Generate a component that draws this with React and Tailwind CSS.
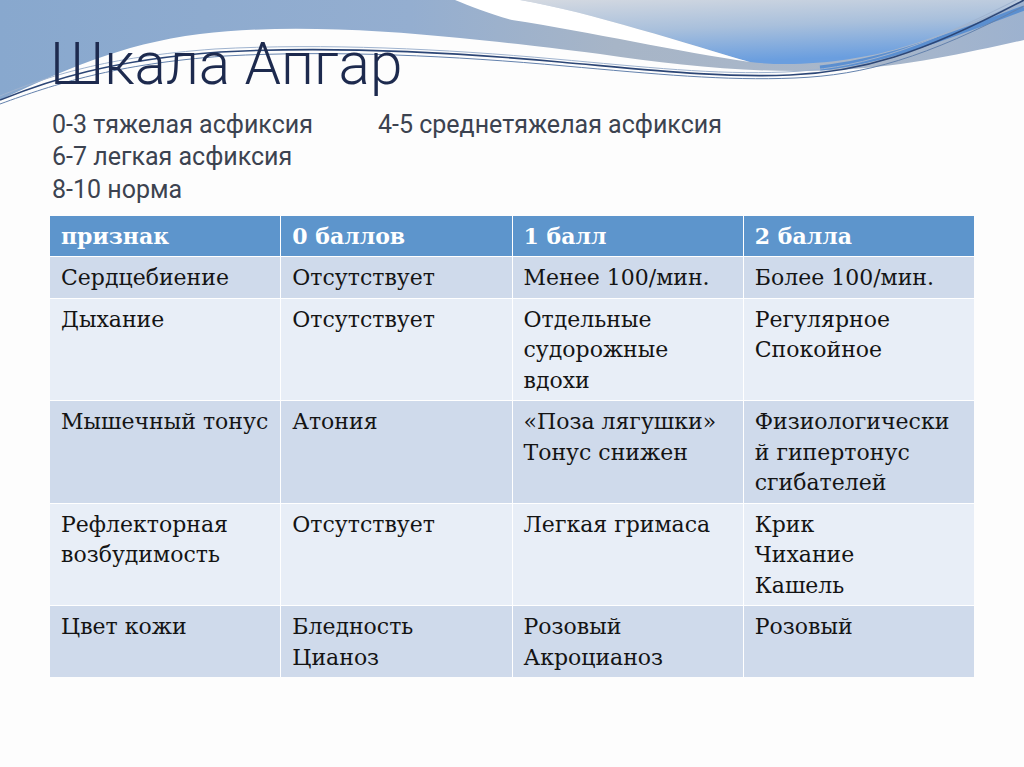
import React from "react";

const rows = [
  { dark: true, cells: [["Сердцебиение"], ["Отсутствует"], ["Менее 100/мин."], ["Более 100/мин."]] },
  { dark: false, cells: [["Дыхание"], ["Отсутствует"], ["Отдельные", "судорожные", "вдохи"], ["Регулярное", "Спокойное"]] },
  { dark: true, cells: [["Мышечный тонус"], ["Атония"], ["«Поза лягушки»", "Тонус снижен"], ["Физиологически", "й гипертонус", "сгибателей"]] },
  { dark: false, cells: [["Рефлекторная", "возбудимость"], ["Отсутствует"], ["Легкая гримаса"], ["Крик", "Чихание", "Кашель"]] },
  { dark: true, cells: [["Цвет кожи"], ["Бледность", "Цианоз"], ["Розовый", "Акроцианоз"], ["Розовый"]] },
];

const headers = ["признак", "0 баллов", "1 балл", "2 балла"];

function Wave() {
  return (
    <svg className="absolute left-0 top-0" width="1024" height="130" viewBox="0 0 1024 130">
      <defs>
        <linearGradient id="band" x1="0" y1="0" x2="1" y2="0">
          <stop offset="0" stopColor="#88a8ce" />
          <stop offset="0.4" stopColor="#94aed0" />
          <stop offset="0.6" stopColor="#a7b5c7" />
          <stop offset="0.85" stopColor="#a9b7ca" />
          <stop offset="1" stopColor="#9db2cf" />
        </linearGradient>
        <linearGradient id="sky" x1="0" y1="0" x2="0.3" y2="1">
          <stop offset="0" stopColor="#d4d9e1" />
          <stop offset="0.5" stopColor="#a9c0dc" />
          <stop offset="1" stopColor="#6a9edf" />
        </linearGradient>
      </defs>
      <path
        d="M0,0 H1024 V40 C970,52 910,66 840,70 C760,74 680,66 600,54 C540,46 500,42 460,38 C380,30 280,24 200,34 C120,44 60,72 0,100 Z"
        fill="url(#band)"
      />
      <path
        d="M520,0 C590,12 690,45 750,62 C800,68 860,60 900,48 C950,33 990,15 1024,0 Z"
        fill="url(#sky)"
      />
      <path
        d="M455,0 L520,0 C590,12 690,45 750,62 C680,52 590,32 512,20 C490,14 470,6 455,0 Z"
        fill="#ffffff"
      />
      <path
        d="M820,68 C880,62 940,40 1024,8"
        stroke="#5b8fd0"
        strokeWidth="5"
        fill="none"
      />
      <path
        d="M0,100 C50,80 110,60 220,52 C330,46 450,52 560,62 C650,70 720,78 790,75 C860,72 920,55 1024,0"
        stroke="#2c4676"
        strokeWidth="1.6"
        fill="none"
      />
      <path
        d="M0,104 C55,84 115,64 225,56 C335,50 455,56 565,66 C655,74 725,81 795,78 C865,75 925,58 1024,6"
        stroke="#6482ad"
        strokeWidth="1"
        fill="none"
      />
      <path
        d="M0,96 C48,76 105,57 215,49 C325,43 445,49 555,59 C645,67 715,75 785,72 C855,69 915,52 1024,-4"
        stroke="#9fb3cf"
        strokeWidth="1"
        fill="none"
      />
    </svg>
  );
}

export default function App() {
  return (
    <div className="relative w-[1024px] h-[767px] overflow-hidden bg-[#fdfdfd]">
      <Wave />
      <div className="relative flex flex-col">
        <h1
          className="ml-[50px] mt-[35px] text-[58.5px] leading-none font-light text-[#1d2a4e]"
          style={{ fontFamily: "Roboto, 'Noto Sans', sans-serif" }}
        >
          Шкала Апгар
        </h1>
        <div
          className="ml-[52px] mt-[15px] text-[25px] leading-[32.5px] text-[#3c4350]"
          style={{ fontFamily: "Roboto, 'Noto Sans', sans-serif" }}
        >
          <div className="flex">
            <span className="w-[326px]">0-3 тяжелая асфиксия</span>
            <span>4-5 среднетяжелая асфиксия</span>
          </div>
          <div>6-7 легкая асфиксия</div>
          <div>8-10 норма</div>
        </div>
        <div
          className="ml-[50px] mt-[10px] w-[924px] grid grid-cols-4 gap-[1px] bg-white text-[22px] leading-[30.5px] text-[#141414]"
          style={{ fontFamily: "'DejaVu Serif', 'Liberation Serif', serif" }}
        >
          {headers.map((h) => (
            <div key={h} className="bg-[#5d95cc] text-white font-bold pl-[11px] h-[40px] flex items-center">
              {h}
            </div>
          ))}
          {rows.map((r, i) =>
            r.cells.map((c, j) => (
              <div
                key={i + "-" + j}
                className={
                  (r.dark ? "bg-[#cfdaeb]" : "bg-[#e8eef7]") + " pl-[11px] pt-[6px] pb-[4px] whitespace-nowrap"
                }
              >
                {c.map((line, k) => (
                  <div key={k}>{line}</div>
                ))}
              </div>
            ))
          )}
        </div>
      </div>
    </div>
  );
}
